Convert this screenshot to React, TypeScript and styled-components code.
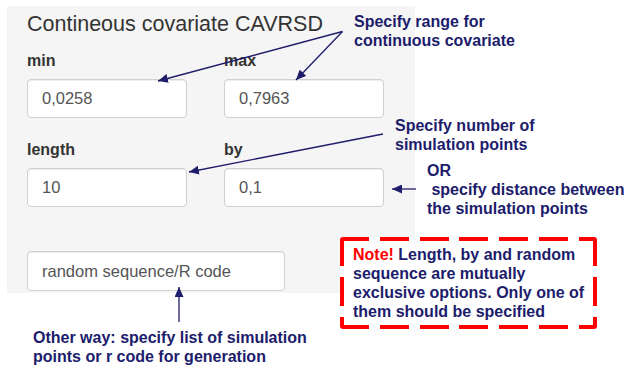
import React from 'react'
import styled, { createGlobalStyle } from 'styled-components'

const NAVY = '#201c6c';
const RED = '#ff0000';

const GlobalStyle = createGlobalStyle`
  html, body {
    margin: 0;
    padding: 0;
    background: #fff;
  }
  body {
    font-family: "Liberation Sans", Arial, sans-serif;
  }
`;

// page
const Page = styled.div`
  position: relative;
  box-sizing: border-box;
  width: 633px;
  height: 373px;
  padding: 6px 0 0 7px;
  overflow: hidden;
`;

// shiny well panel
const Well = styled.div`
  box-sizing: border-box;
  width: 408px;
  height: 287px;
  padding: 6px 0 0 20px;
  background: #f5f5f5;
`;

const Title = styled.h3`
  margin: 0;
  font-size: 21.5px;
  line-height: 24px;
  font-weight: normal;
  color: #333;
`;

const FieldGrid = styled.div`
  display: grid;
  grid-template-columns: 160px 160px;
  column-gap: 37px;
  row-gap: 22px;
  margin-top: 15px;
`;

const Field = styled.div`
  display: flex;
  flex-direction: column;
`;

const Label = styled.label`
  margin-bottom: 8px;
  font-size: 16px;
  font-weight: bold;
  line-height: 20px;
  color: #333;
`;

const Input = styled.input<{ $wide?: boolean }>`
  display: block;
  box-sizing: border-box;
  width: ${({ $wide }) => ($wide ? '258px' : '160px')};
  height: ${({ $wide }) => ($wide ? '40px' : '39px')};
  margin-top: ${({ $wide }) => ($wide ? '44px' : '0')};
  padding: 0 14px;
  border: 1px solid #d0d0d0;
  border-radius: 4px;
  background: #fff;
  box-shadow: inset 0 1px 1px rgba(0, 0, 0, 0.075);
  font-family: "Liberation Sans", Arial, sans-serif;
  font-size: 16.5px;
  color: #555;
  outline: none;
`;

// annotations
const Hint = styled.div`
  margin: 35px 0 0 26px;
  font-size: 16px;
  font-weight: bold;
  line-height: 19px;
  color: ${NAVY};
`;

const Callout = styled.div<{ $x: number; $y: number }>`
  position: absolute;
  left: ${({ $x }) => $x}px;
  top: ${({ $y }) => $y}px;
  font-size: 16px;
  font-weight: bold;
  line-height: 19px;
  color: ${NAVY};
  white-space: nowrap;
`;

const dash = (dir: string) =>
  `repeating-linear-gradient(${dir}, ${RED} 0 29px, transparent 29px 39.8px)`;

const NoteBox = styled.div`
  position: absolute;
  left: 340px;
  top: 237px;
  box-sizing: border-box;
  width: 257px;
  height: 92px;
  padding: 8px 0 0 13px;
  border-radius: 3px;
  background:
    ${dash('90deg')} left top / 100% 4px no-repeat,
    ${dash('90deg')} left bottom / 100% 4px no-repeat,
    ${dash('180deg')} left top / 4px 100% no-repeat,
    ${dash('180deg')} right top / 4px 100% no-repeat,
    #fff;
  font-size: 16px;
  font-weight: bold;
  line-height: 19px;
  color: ${NAVY};
  white-space: nowrap;

  em {
    font-style: normal;
    color: ${RED};
  }
`;

const Arrows = styled.svg`
  position: absolute;
  left: 0;
  top: 0;
  pointer-events: none;
`;

const arrows = [
  [342.5, 31.5, 158, 81],
  [342.5, 31.5, 296, 80],
  [383, 134, 189, 172],
  [416, 189, 392, 189],
  [179, 322, 179, 287],
];

const App = () => {
  return (
    <Page>
      <GlobalStyle />

      {/* panel */}
      <Well>
        <Title>Contineous covariate CAVRSD</Title>
        <FieldGrid>
          <Field>
            <Label>min</Label>
            <Input defaultValue="0,0258" />
          </Field>
          <Field>
            <Label>max</Label>
            <Input defaultValue="0,7963" />
          </Field>
          <Field>
            <Label>length</Label>
            <Input defaultValue="10" />
          </Field>
          <Field>
            <Label>by</Label>
            <Input defaultValue="0,1" />
          </Field>
        </FieldGrid>
        <Input $wide defaultValue="random sequence/R code" />
      </Well>

      <Hint>
        Other way: specify list of simulation
        <br />
        points or r code for generation
      </Hint>

      {/* callouts */}
      <Callout $x={354} $y={12}>
        Specify range for
        <br />
        continuous covariate
      </Callout>
      <Callout $x={395} $y={116}>
        Specify number of
        <br />
        simulation points
      </Callout>
      <Callout $x={427} $y={161}>
        OR
        <br />
        &nbsp;specify distance between
        <br />
        the simulation points
      </Callout>

      <NoteBox>
        <em>Note!</em> Length, by and random
        <br />
        sequence are mutually
        <br />
        exclusive options. Only one of
        <br />
        them should be specified
      </NoteBox>

      <Arrows width={633} height={373} viewBox="0 0 633 373">
        <defs>
          <marker
            id="head"
            markerWidth={10}
            markerHeight={9}
            refX={10}
            refY={4.5}
            orient="auto"
            markerUnits="userSpaceOnUse"
          >
            <path d="M0,0 L10,4.5 L0,9 z" fill={NAVY} />
          </marker>
        </defs>
        {arrows.map(([x1, y1, x2, y2], i) => (
          <line
            key={i}
            x1={x1}
            y1={y1}
            x2={x2}
            y2={y2}
            stroke={NAVY}
            strokeWidth={1.3}
            markerEnd="url(#head)"
          />
        ))}
      </Arrows>
    </Page>
  )
}

export default App
